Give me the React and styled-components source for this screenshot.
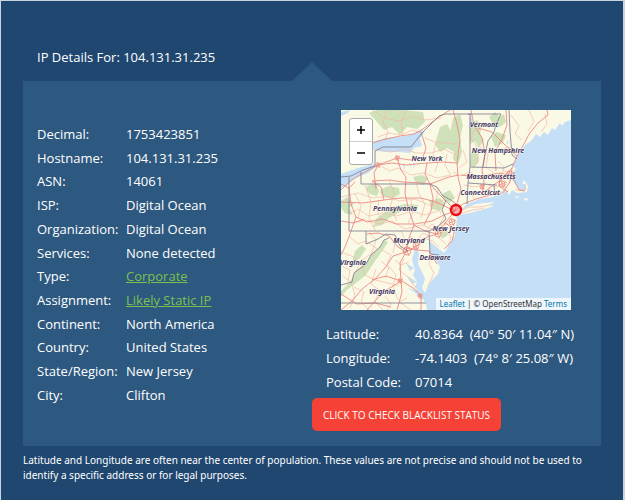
import React from 'react';
import styled, { createGlobalStyle } from 'styled-components';

const GlobalStyle = createGlobalStyle`
  * {
    box-sizing: border-box;
  }
  body {
    margin: 0;
    background-color: #1f4770;
    font-family: 'Open Sans', 'Noto Sans', sans-serif;
    color: #fff;
  }
`;

const Page = styled.main`
  min-height: 100vh;
  padding: 44px 22px 16px;
  background-color: #1f4770;
  border: 1px solid #c9d6e0;
  border-width: 1px 2px 0 1px;
`;

const Title = styled.h1`
  margin: 0;
  padding: 0 14px 12px;
  font-size: 13px;
  line-height: 24px;
  font-weight: 400;
`;

const Panel = styled.section`
  position: relative;
  display: grid;
  grid-template-columns: 1fr 1fr;
  padding: 29px 0 15px;
  background-color: #2d5880;

  &::before {
    content: '';
    position: absolute;
    bottom: 100%;
    left: 50%;
    margin-left: -20px;
    border: 20px solid transparent;
    border-top-width: 0;
    border-bottom: 19px solid #2d5880;
  }
`;

const Details = styled.dl`
  display: flex;
  flex-direction: column;
  justify-content: space-between;
  margin: 0;
  padding: ${(props) => (props.$tall ? '13px 14px 25px' : '12px 14px 4px')};
`;

const Row = styled.div`
  display: flex;
  font-size: 13px;
  line-height: ${(props) => (props.$loose ? '24px' : '22px')};
  white-space: nowrap;
`;

const Label = styled.dt`
  flex: 0 0 89px;
`;

const Value = styled.dd`
  margin: 0;
  white-space: pre;
`;

const ValueLink = styled.a`
  color: #7ac14d;
  text-decoration: underline;
`;

const Location = styled.div`
  display: flex;
  flex-direction: column;
`;

const MapBox = styled.div`
  position: relative;
  height: 200px;
  margin: 0 30px 0 29px;
  overflow: hidden;
  background-color: #c5dff6;
`;

const MapDrawing = styled.svg`
  display: block;
  width: 100%;
  height: 100%;

  text {
    font: italic 700 7px 'Noto Sans', 'Open Sans', sans-serif;
    fill: #46395f;
    stroke: #fff;
    stroke-width: 1px;
    stroke-opacity: 0.7;
    paint-order: stroke;
    text-anchor: middle;
  }
`;

const ZoomControl = styled.div`
  position: absolute;
  top: 8px;
  left: 8px;
  display: flex;
  flex-direction: column;
  background-color: #fff;
  border: 1px solid #aaa;
  border-radius: 3px;
`;

const ZoomButton = styled.button`
  display: flex;
  align-items: center;
  justify-content: center;
  width: 22px;
  height: 22px;
  padding: 0;
  border: 0;
  background: none;
  color: #000;
  cursor: pointer;

  & + & {
    height: 23px;
    border-top: 1px solid #ccc;
  }
`;

const Attribution = styled.div`
  position: absolute;
  right: 0;
  bottom: 0;
  padding: 0 4px;
  background-color: rgba(255, 255, 255, 0.7);
  color: #333;
  font-family: 'Noto Sans', sans-serif;
  font-size: 8px;
  line-height: 12px;
  white-space: nowrap;

  a {
    color: #0078a8;
    text-decoration: none;
  }
`;

const BlacklistButton = styled.button`
  align-self: flex-start;
  height: 33px;
  padding: 0 11px;
  border: 0;
  border-radius: 5px;
  background-color: #f64236;
  color: #fff;
  font-family: inherit;
  font-size: 10px;
  text-transform: uppercase;
  white-space: nowrap;
  cursor: pointer;
`;

const Note = styled.p`
  margin: 7px 0 0;
  font-family: 'Noto Sans', sans-serif;
  font-size: 10px;
  line-height: 15px;
`;

const details = [
  { label: 'Decimal:', value: '1753423851' },
  { label: 'Hostname:', value: '104.131.31.235' },
  { label: 'ASN:', value: '14061' },
  { label: 'ISP:', value: 'Digital Ocean' },
  { label: 'Organization:', value: 'Digital Ocean' },
  { label: 'Services:', value: 'None detected' },
  { label: 'Type:', value: 'Corporate', link: true },
  { label: 'Assignment:', value: 'Likely Static IP', link: true },
  { label: 'Continent:', value: 'North America' },
  { label: 'Country:', value: 'United States' },
  { label: 'State/Region:', value: 'New Jersey' },
  { label: 'City:', value: 'Clifton' },
];

const coordinates = [
  { label: 'Latitude:', value: '40.8364  (40° 50′ 11.04″ N)' },
  { label: 'Longitude:', value: '-74.1403  (74° 8′ 25.08″ W)' },
  { label: 'Postal Code:', value: '07014' },
];

const states = [
  { name: 'Vermont', x: 143, y: 17 },
  { name: 'New Hampshire', x: 157, y: 43 },
  { name: 'New York', x: 86, y: 51 },
  { name: 'Massachusetts', x: 150, y: 69 },
  { name: 'Connecticut', x: 139, y: 85 },
  { name: 'Pennsylvania', x: 54, y: 101 },
  { name: 'New Jersey', x: 110, y: 121 },
  { name: 'Maryland', x: 68, y: 133 },
  { name: 'Delaware', x: 94, y: 150 },
  { name: 'Virginia', x: 12, y: 155 },
  { name: 'Virginia', x: 41, y: 184 },
];

const forests = [
  'M28 3L36 0L62 0L82 2L84 12L76 19L66 17L59 25L51 17L43 20L36 12Z',
  'M99 17L106 14L110 21L117 18L118 34L113 42L106 38L99 42L94 34Z',
  'M112 8L119 4L122 15L119 28L121 42L117 55L112 49L114 35L109 24Z',
  'M128 13L136 10L141 15L139 24L143 30L138 38L134 31L129 34Z',
  'M148 7L154 2L159 7L163 4L165 12L159 17L152 14Z',
  'M150 27L155 22L165 25L162 33L154 37Z',
  'M130 43L136 41L138 51L133 58L129 55Z',
  'M26 76L35 73L38 81L36 86L29 84L25 80Z',
  'M40 79L48 76L58 78L59 84L51 89L43 87L39 83Z',
  'M35 109L50 97L64 94L78 95L75 99L61 101L48 108L41 115L32 117Z',
  'M0 91L6 87L13 94L8 98L12 105L4 103L0 98Z',
  'M88 91L99 88L104 94L99 101L91 99Z',
  'M101 84L109 80L114 88L108 93L102 90Z',
  'M0 181L9 172L15 161L25 153L31 144L39 137L44 130L47 132L39 144L32 154L25 165L15 173L6 180L0 186Z',
  'M14 141L21 135L25 139L18 149L11 153Z',
  'M72 67L81 65L87 68L83 75L75 73Z',
  'M98 119L105 117L107 125L101 129Z',
];

const minorRoads = `
  M31 0L44 8L58 11L72 6L84 10L100 8M37 27L48 23L60 25L71 20L80 23M84 28L94 32L104 33L115 34
  M35 39L50 42L64 39L75 43L90 43L103 39L115 45M40 56L49 61L57 58L70 65L83 63L96 68L110 65
  M0 87L17 83L32 88L46 86L58 91L74 89L90 96L103 90M8 104L17 99L28 106L42 103L56 106L70 101L84 105L97 101
  M12 113L25 110L39 114L51 111L64 119L81 115L94 120L107 113M24 75L30 92L28 108L34 120M48 70L53 83L49 97L56 111
  M75 72L78 84L84 94L80 108M8 126L17 134L25 131L36 139M28 122L35 130L31 143L20 151L14 163
  M0 142L13 147L20 154L24 165L34 170L47 173L58 176M41 140L50 145L46 154L55 165L52 176L57 190
  M63 149L58 160L67 167L75 178M35 159L30 174L38 180L34 192L42 200M13 177L23 182L20 192L28 200
  M2 166L10 172L14 185L9 198M76 130L82 123L88 126M90 142L88 154L93 163L88 174M103 118L110 127L107 137
  M112 62L120 66L129 62L140 68L150 64L160 68L170 63M123 75L134 77L144 74L155 77L166 74
  M128 8L134 18L130 28L138 40L136 54M139 37L147 44L145 57L154 64M148 38L159 41L167 37L175 41
  M157 51L163 57L160 67L166 73M170 5L178 16L174 24L181 30M188 0L193 11L187 21M204 4L206 14L200 22
  M162 60L170 65L168 74M158 68L165 78L162 84M128 81L133 88M149 77L146 87M174 80L184 80L184 74
  M116 102L128 97L139 97L149 95M118 104L132 100L143 98M84 122L91 114L96 118L104 111
  M44 30L47 22L42 12L46 0M62 26L60 12L66 0M95 33L92 44L97 52L94 62M106 44L104 55L110 65M14 84L20 96L17 108
  M38 90L36 101L42 112M70 90L72 102L67 114M97 78L95 92L100 104M104 104L99 114L106 122M60 120L64 130L60 138
  M48 126L54 134L52 143M70 126L66 136L73 140M40 151L48 158L44 168M0 156L9 160L7 172M54 150L60 155L68 152
  M66 188L58 192L70 200M44 186L50 194L46 200M98 128L105 134M83 128L92 131L98 137M118 58L126 52L122 40
`;

const majorRoads = `
  M31 33L45 29L59 26L73 24L82 19L90 13L98 7L109 0M37 55L56 48L69 50L82 47L85 38L80 22
  M37 55L51 53L65 55L86 53L102 52L116 53M86 53L84 64L89 74L99 85L108 94L114 101
  M56 48L60 60L65 67L64 83L67 97L73 115L68 128L65 142M37 55L33 63L35 79M37 55L22 63L9 71L0 80
  M0 74L8 78L14 72M8 78L10 94L15 107L26 112L42 109L55 114L74 114L91 111L103 105L114 101
  M0 92L22 93L43 90L60 88L80 88L95 92L114 101M0 111L12 113L23 109M15 107L9 124L4 137L0 145
  M43 90L40 77L31 71L48 70L62 72L82 73L89 74M89 74L108 67L118 65M89 74L92 88L90 101L83 115
  M73 115L84 121L96 124L104 113L114 101M96 124L86 127L76 136L65 142M65 142L59 153L60 171L61 182L56 200
  M65 142L57 137L48 126L37 123L26 124M65 142L52 146L44 158L34 169L21 179L12 190L0 200
  M60 171L45 166L31 170M61 171L75 180L80 187L80 200M60 171L44 181L34 191L26 200M0 184L16 194L34 193L50 197
  M64 138L76 140L88 141L96 154M104 113L114 119L111 131L103 139M116 53L117 67L120 79L114 101
  M112 0L116 14L119 30L116 53M130 0L133 15L141 28L144 43L141 60L143 72L141 84M165 0L166 15L161 29L154 42L155 61
  M120 65L135 67L148 65L159 63L171 66M141 84L151 76L160 70L171 58M171 58L176 46L184 32L188 24L197 13L207 5L206 0
  M114 101L122 94L135 89L149 85L161 83L169 72L171 58M176 46L163 34L151 22L137 18M159 63L158 76L167 82
  M171 66L178 80L184 81
`;

const borders = `
  M0 67L10 66L22 60L34 56L34 41L42 37L70 37L77 28L81 23L89 15L98 6L104 4L130 4
  M20 62L20 74L89 74L96 77L102 86L110 90L115 94M8 67L8 121L88 121M25 121L25 134L37 129L45 124L54 125L59 136L67 141
  M88 121L89 144L98 145M105 90L101 100L105 109L96 117L88 121M129 4L129 42L129 57L127 73L126 94
  M129 57L163 58L172 54M127 73L156 75M153 75L154 85M127 4L160 4L155 15L153 22L147 31L144 45L142 57
  M168 0L169 21L171 45L176 49M0 175L11 172L13 163L25 154L30 145L39 137L43 130L48 128
  M0 193L85 193
`;

// Ring roads and short spurs around the larger cities
const cities = [
  { x: 56, y: 48, r: 2 },
  { x: 37, y: 55, r: 2 },
  { x: 66, y: 141, r: 4 },
  { x: 75, y: 136, r: 3 },
  { x: 59, y: 171, r: 2 },
  { x: 79, y: 186, r: 2 },
  { x: 97, y: 124, r: 3 },
  { x: 111, y: 112, r: 3 },
  { x: 169, y: 65, r: 4 },
  { x: 161, y: 74, r: 3 },
  { x: 141, y: 77, r: 2 },
];

function LocationMap() {
  return (
    <MapDrawing viewBox="0 0 230 200" preserveAspectRatio="xMidYMid slice" role="img" aria-label="Location map">
      <path
        fill="#faf9e5"
        d="M0 0H230V10L224 12L221 16L219 13L214 20L211 18L207 25L203 22L199 27L195 24L190 31L184 35L180 41L176 45L174 51L171 55L175 59L171 64L171 70L175 75L179 81L185 80L185 75L181 73L183 70L187 76L186 82L176 83L171 80L168 85L164 79L162 84L151 87L139 89L126 94L119 101L113 104L116 108L114 125L107 137L103 143L99 140L92 134L89 131L88 140L94 149L99 157L97 164L92 169L87 175L84 183L81 178L84 169L80 160L77 154L78 144L75 135L73 142L71 150L74 160L72 165L76 172L74 177L78 182L75 185L82 189L85 194L86 200H0Z"
      />
      <path fill="#faf9e5" d="M115 103L124 98L135 94L154 92L148 95L153 96L140 100L129 103L118 105Z" />
      <path fill="#faf9e5" d="M173 87L178 86L177 88ZM182 89L187 88L186 91Z" />
      {forests.map((d) => (
        <path key={d} d={d} fill="#cfe1b9" />
      ))}
      <g fill="#c5dff6">
        <path d="M31 32L44 28L58 27L70 25L80 20L84 21L79 29L81 36L73 38L69 43L58 42L43 42L32 40Z" />
        <path d="M0 64L17 58L33 54L35 57L27 63L15 68L6 75L0 78Z" />
        <path d="M0 2L9 0L7 3L0 6ZM130 4L132 13L129 21L128 13ZM165 33L168 30L167 34Z" />
        <path d="M62 54L63 61L64 54ZM68 53L70 62L69 53ZM72 53L73 59L74 53Z" />
        <path d="M73 158L65 153L69 161ZM76 172L66 166L71 174ZM78 181L67 178L76 184Z" />
      </g>
      <path d={minorRoads} fill="none" stroke="#f5b9a8" strokeWidth="0.7" strokeLinejoin="round" />
      <path d={majorRoads} fill="none" stroke="#ec8a83" strokeWidth="0.9" strokeLinejoin="round" />
      {cities.map(({ x, y, r }) => (
        <g key={`${x}-${y}`} fill="none" stroke="#ec8a83" strokeWidth="0.8">
          <circle cx={x} cy={y} r={r} />
          <path d={`M${x - r} ${y + 1}L${x} ${y}L${x + r + 1} ${y - 2}M${x - 1} ${y - r - 1}L${x} ${y}L${x + 2} ${y + r + 1}`} />
        </g>
      ))}
      <path d={borders} fill="none" stroke="#7b768c" strokeWidth="0.8" />
      {states.map(({ name, x, y }) => (
        <text key={`${name}-${y}`} x={x} y={y}>{name}</text>
      ))}
      <circle cx="115" cy="100" r="5" fill="#f03" fillOpacity="0.25" stroke="#f00b14" strokeWidth="2.4" />
    </MapDrawing>
  );
}

function DetailRow({ item, loose }) {
  return (
    <Row $loose={loose}>
      <Label>{item.label}</Label>
      <Value>{item.link ? <ValueLink href="#">{item.value}</ValueLink> : item.value}</Value>
    </Row>
  );
}

const App = () => {
  return (
    <>
      <GlobalStyle />
      <Page>
        <Title>IP Details For: 104.131.31.235</Title>
        <Panel>
          <Details $tall>
            {details.map((item) => (
              <DetailRow key={item.label} item={item} />
            ))}
          </Details>
          <Location>
            <MapBox>
              <LocationMap />
              <ZoomControl>
                <ZoomButton type="button" aria-label="Zoom in">
                  <svg width="10" height="10" viewBox="0 0 10 10">
                    <path d="M1 5H9M5 1V9" stroke="#000" strokeWidth="1.5" />
                  </svg>
                </ZoomButton>
                <ZoomButton type="button" aria-label="Zoom out">
                  <svg width="10" height="10" viewBox="0 0 10 10">
                    <path d="M1 5H9" stroke="#000" strokeWidth="1.5" />
                  </svg>
                </ZoomButton>
              </ZoomControl>
              <Attribution>
                <a href="#">Leaflet</a> | © OpenStreetMap <a href="#">Terms</a>
              </Attribution>
            </MapBox>
            <Details>
              {coordinates.map((item) => (
                <DetailRow key={item.label} item={item} loose />
              ))}
            </Details>
            <BlacklistButton type="button">Click to check blacklist status</BlacklistButton>
          </Location>
        </Panel>
        <Note>
          Latitude and Longitude are often near the center of population. These values are not precise and should not be
          used to identify a specific address or for legal purposes.
        </Note>
      </Page>
    </>
  );
};

export default App;
